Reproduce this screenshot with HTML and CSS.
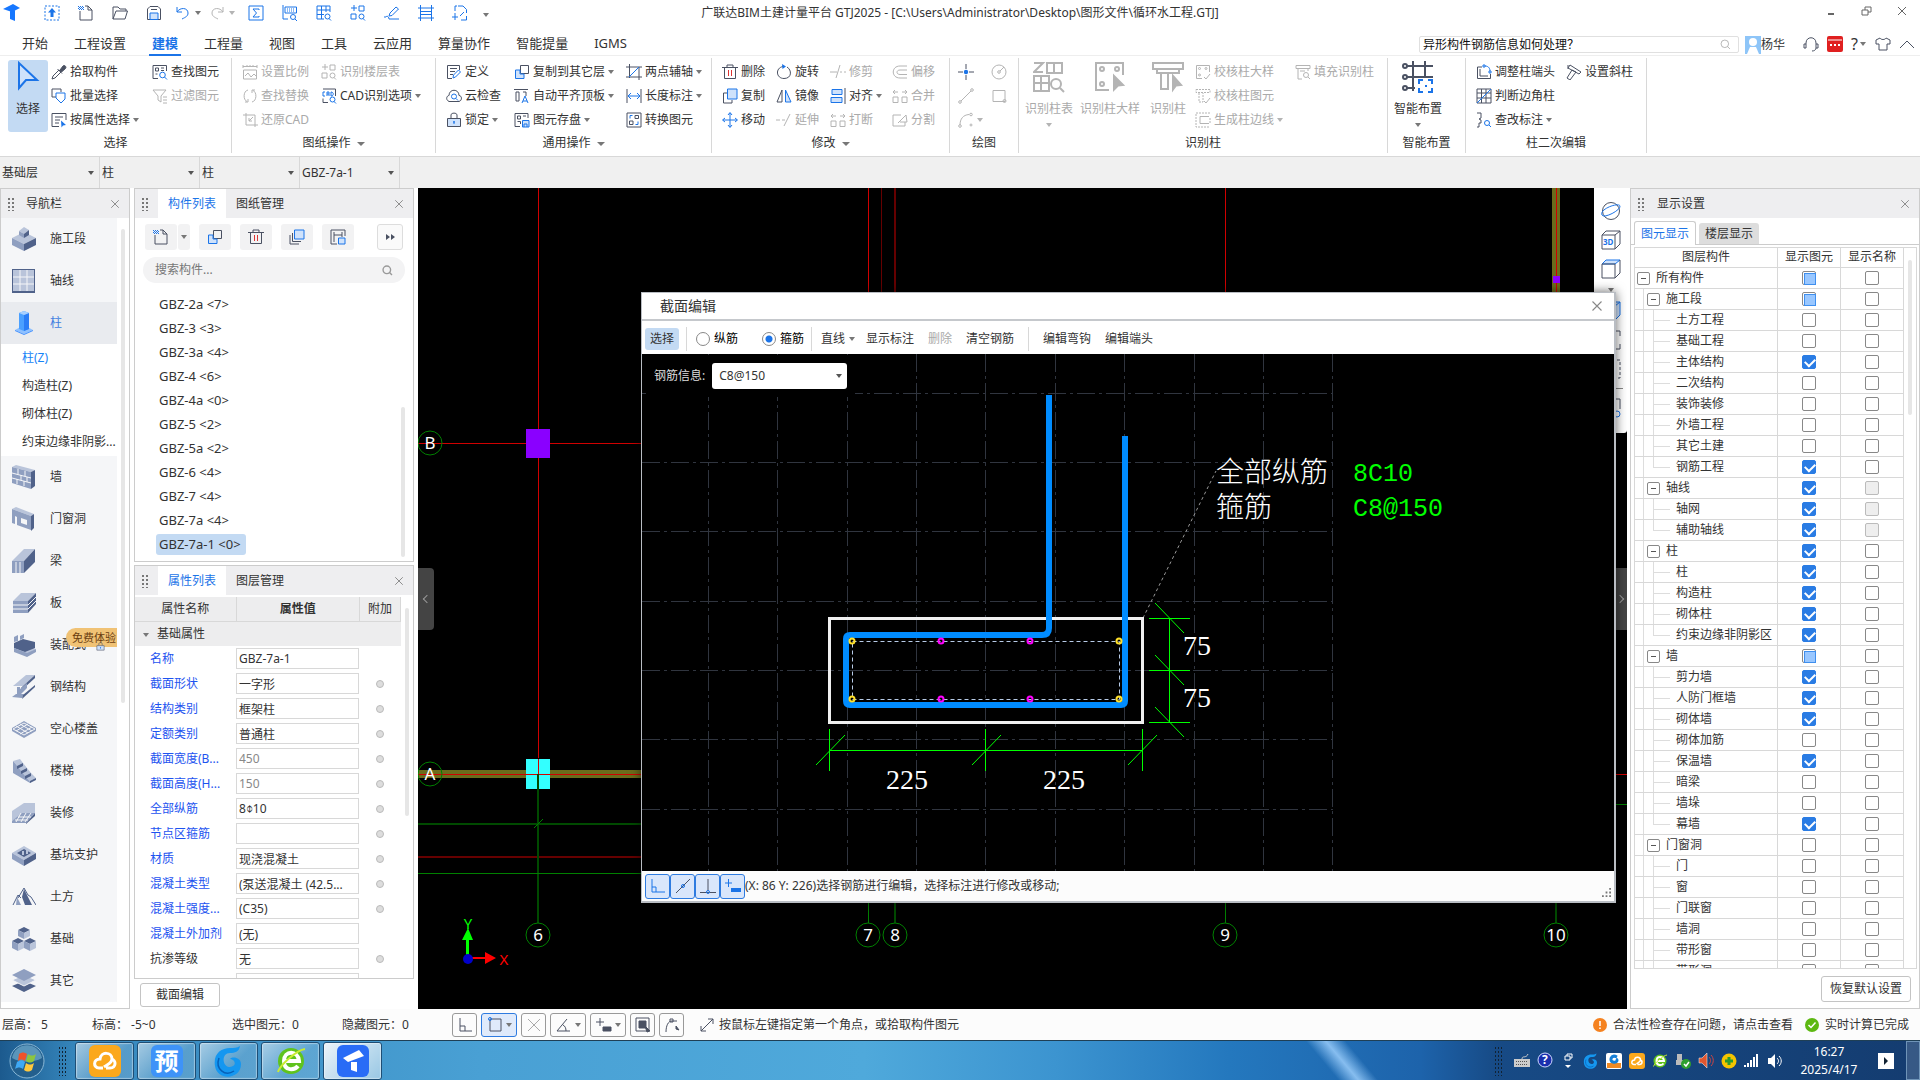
FILE: index.html
```html
<!DOCTYPE html>
<html lang="zh-CN">
<head>
    <meta charset="UTF-8">
    <meta name="viewport" content="width=device-width, initial-scale=1.0">
    <title>广联达BIM土建计量平台 GTJ2025</title>
    <link rel="stylesheet" href="styles.css">
</head>
<body>
    <!-- Icon sprite -->
    <svg class="sprite" aria-hidden="true">
        <symbol id="i-newsel" viewBox="0 0 16 16"><path class="b" stroke-dasharray="2 1.5" d="M1 1h14v14H1z"/><path class="bf" d="M8 3l4 4.500H9.500V12h-3V7.500H4z"/></symbol>
        <symbol id="i-new" viewBox="0 0 16 16"><path d="M2 6v9h12V5l-4-4H7M10 1v4h4"/><path class="b" stroke-dasharray="1 1" d="M0 1.500h5M1 2.500h5M0 3.500h5M1 4.500h5"/></symbol>
        <symbol id="i-open" viewBox="0 0 16 16"><path d="M1 14V2h5l2 2h6v2M1 14L4 6h11.500L13 14z"/></symbol>
        <symbol id="i-save" viewBox="0 0 16 16"><path d="M1.500 4l2.500-2.500h8L14.500 4v10.500h-13zM5 4.500h6"/><path class="b bl" d="M4 8h8v6.500H4z"/></symbol>
        <symbol id="i-undo" viewBox="0 0 16 16"><path class="b" d="M2 2v5h5M2 7c3-5 11-4.500 11 1 0 3-2 4-6 6"/></symbol>
        <symbol id="i-redo" viewBox="0 0 16 16"><path d="M14 2v5H9M14 7C11 2 3 2.500 3 8c0 3 2 4 6 6"/></symbol>
        <symbol id="i-sigma" viewBox="0 0 16 16"><path class="b" d="M1 1h14v14H1zM11 5V4H5l3.500 4L5 12h6v-1"/></symbol>
        <symbol id="i-tblfind" viewBox="0 0 16 16"><path class="b" d="M1 0v14h5M3 2h11.500v6H3z"/><path class="b" stroke-dasharray="1 1" d="M5 4h8M5 6h8"/><circle class="b" cx="11" cy="12" r="2.500"/><path class="b" d="M13 14l2 2"/></symbol>
        <symbol id="i-gridfind" viewBox="0 0 16 16"><path class="b" d="M1 1h13v6M1 1v13h7M1 5h13M1 9.500h7M5.500 1v13M10 1v6"/><circle class="b" cx="11.500" cy="11.500" r="2.500"/><path class="b" d="M13 13.500l2 2"/></symbol>
        <symbol id="i-compfind" viewBox="0 0 16 16"><path class="b" d="M1 3h6M4 0v6M9 1h5v5H9zM1 9h5v5H1z"/><circle class="b" cx="11.500" cy="11.500" r="2.500"/><path class="b" d="M13 13.500l2 2"/></symbol>
        <symbol id="i-pen" viewBox="0 0 16 16"><path class="b" d="M5 11l1-3 6-6 2.500 2L8 10.500zM0 12h2c1-2 3 0 3 2h10"/></symbol>
        <symbol id="i-ladder" viewBox="0 0 16 16"><path class="b" d="M2.500 0v16M13.500 0v16M0 3h16M0 13h16M2.500 6.500h11M2.500 9.500h11"/></symbol>
        <symbol id="i-addpage" viewBox="0 0 16 16"><path class="b" d="M6 1h5l3.500 3.500V8M3 6V1h2M14.500 11v4H9M3 8v7M0 12h6M8 11l4-4"/></symbol>
        <symbol id="i-pick" viewBox="0 0 16 16"><path d="M1 15l1-3 6-6 2 2-6 6z"/><path fill="currentColor" d="M6.500 5l4.500 4.500M9 6l3-4c1-1.500 4 .5 2.500 2.500L10.500 8z"/></symbol>
        <symbol id="i-batch" viewBox="0 0 16 16"><path d="M5 9H1V1h9v3"/><path class="b" d="M5 5h9v6l-4 4-5-5z"/></symbol>
        <symbol id="i-attr" viewBox="0 0 16 16"><path d="M8 14.500H1v-13h14V8M4 5h8M4 8h5M4 11h4"/><path class="bf" d="M10 8.500l5 4.500-3 .5-1.500 2z"/></symbol>
        <symbol id="i-find" viewBox="0 0 16 16"><path d="M6 14.500H1v-13h13.500V7M3.500 4h3v3h-3zM3.500 10h2M9 4h3M9 6.500h3"/><circle class="b" cx="10.500" cy="11" r="2.800"/><path class="b" d="M12.500 13l2.500 2.500"/></symbol>
        <symbol id="i-filter" viewBox="0 0 16 16"><path d="M1 2h13L9 8v6l-3-2V8zM11 9h4M11 12h4M11 15h4"/></symbol>
        <symbol id="i-scale" viewBox="0 0 16 16"><path d="M1 1v3M1 2.500h14M15 1v3M5 1v2M8 1v2M11 1v2M1.500 6h13v9h-13zM3 12l3-3 3 4 3-3 2 2"/></symbol>
        <symbol id="i-swap" viewBox="0 0 16 16"><path d="M6 2C1 3 1 12 5 13.500M3 14h3v-3M10 14c5-1 5-10 1-11.500M13 2h-3v3"/></symbol>
        <symbol id="i-crop" viewBox="0 0 16 16"><path d="M4 1v12h12M1 3h12v12M11 5L7 9M7 6v3h3"/></symbol>
        <symbol id="i-cad" viewBox="0 0 16 16"><path d="M7 14.500H2v-4M2 1h12.500v7"/><path class="b" d="M4 4H2v4h2M6 8V4h2v4M6 6h2M10 4v4c3 0 3-4 0-4"/><circle class="b" cx="11.500" cy="11.500" r="2.500"/><path class="b" d="M13 13.500l2 2"/></symbol>
        <symbol id="i-define" viewBox="0 0 16 16"><path d="M6 14.500H1.500v-13h12V6M4 4.500h7M4 7.500h5M4 10.500h3"/><path class="b" d="M7 14l.5-3 5-5 2 2-5 5z"/></symbol>
        <symbol id="i-cloud" viewBox="0 0 16 16"><path d="M3 13.500c-4-2-2-6 0-6 0-7 10-7 10 0 3 0 3.500 5 0 6z"/><circle class="b" cx="8" cy="8.500" r="2.500"/><path class="b" d="M10 10.500l2 2"/></symbol>
        <symbol id="i-lock" viewBox="0 0 16 16"><path class="bl" d="M1.500 6.500h13v8h-13z"/><path d="M5 6V3c0-2.500 6-2.500 6 0v3"/><path class="b" d="M8 9v3M7 10h2"/></symbol>
        <symbol id="i-copyto" viewBox="0 0 16 16"><path d="M6.500 1.500h8v8h-8z"/><path class="b bl" d="M6 6H1.500v8.500H10V10H6z"/></symbol>
        <symbol id="i-align" viewBox="0 0 16 16"><path d="M0 1.500h14M2 4h3v9H2zM9 4h3v4"/><path class="b" d="M8 15l3-7 3 7M9 13h4"/></symbol>
        <symbol id="i-store" viewBox="0 0 16 16"><path d="M6 14.500H1v-13h13V6M3.500 4h3v3h-3zM3.500 9.500h3V12M9 4h3"/><path class="b bl" d="M8.500 8.500H15V15H8.500zM10 15v-3h3v3"/></symbol>
        <symbol id="i-axis2" viewBox="0 0 16 16"><path d="M3.500 0v14M0 3h16M13 3v13M0 13h16"/><path class="b" d="M3 13L13 3"/></symbol>
        <symbol id="i-length" viewBox="0 0 16 16"><path d="M1 1v14M15 1v14"/><path class="b" d="M2 8h12M5 5L2 8l3 3M11 5l3 3-3 3"/></symbol>
        <symbol id="i-convert" viewBox="0 0 16 16"><path d="M1 1h14v14H1z"/><path d="M9 3.500h3.500v3H9zM3.500 9H7v3.500H3.500z"/><path class="b" d="M6.500 3.500H4v3M9.500 12.500H12v-3"/></symbol>
        <symbol id="i-trash" viewBox="0 0 16 16"><path d="M0 3.500h16M5 3V1h6v2M2.500 3.500v11h11v-11"/><path stroke="#d33" d="M6.500 6v6M9.500 6v6"/></symbol>
        <symbol id="i-copy" viewBox="0 0 16 16"><path d="M5 5H1.500v10H10v-3"/><path class="b bl" d="M5.500 1H15v10H5.500z"/></symbol>
        <symbol id="i-move" viewBox="0 0 16 16"><path class="b" d="M8 1v14M1 8h14M6 3l2-2.500L10 3M6 13l2 2.500 2-2.500M3 6L.5 8 3 10M13 6l2.500 2-2.500 2"/></symbol>
        <symbol id="i-rotate" viewBox="0 0 16 16"><path d="M7 2.500C-1 4 0 14.500 8 14.500S16 6 11 3"/><path class="bf" d="M6 0l4 2.500L6.500 5z"/></symbol>
        <symbol id="i-mirror" viewBox="0 0 16 16"><path d="M6 2v12H1z"/><path class="b bl" d="M9.500 2v12H15z"/></symbol>
        <symbol id="i-extend" viewBox="0 0 16 16"><path d="M0 8h4M6 8h3M8 14l6-12"/></symbol>
        <symbol id="i-trim" viewBox="0 0 16 16"><path d="M0 8h7M6 14l4-13M10 8h2M14 8h2"/></symbol>
        <symbol id="i-just" viewBox="0 0 16 16"><path d="M15 0v16"/><path class="b bl" d="M2 1.500h10v5H2zM1 9.500h11v5H1z"/></symbol>
        <symbol id="i-break" viewBox="0 0 16 16"><path d="M1 9h5v5.500H1zM10 9h5v5.500h-5zM6 4H1M3 2L1 4l2 2M10 4h5M13 2l2 2-2 2"/></symbol>
        <symbol id="i-offset" viewBox="0 0 16 16"><path d="M15 2H8c-9 0-9 12 0 12h7M15 6H8c-4 0-4 4.500 0 4.500h7"/></symbol>
        <symbol id="i-split" viewBox="0 0 16 16"><path d="M9 3H1v11h12v-4M6 11l8-8 1 7H8"/></symbol>
        <symbol id="i-point" viewBox="0 0 16 16"><path d="M8 0v5M8 11v5M0 8h5M11 8h5"/><circle class="bf" cx="8" cy="8" r="2.200"/></symbol>
        <symbol id="i-line" viewBox="0 0 16 16"><path d="M3 13L13 3"/><circle cx="2" cy="14" r="1.300"/><circle cx="14" cy="2" r="1.300"/></symbol>
        <symbol id="i-arc" viewBox="0 0 16 16"><path d="M2 13C2 7 5 3 11 2.500"/><circle cx="2" cy="14" r="1.300"/><circle cx="13" cy="2.500" r="1.300"/><circle cx="13" cy="13" r="1"/></symbol>
        <symbol id="i-circle" viewBox="0 0 16 16"><circle cx="8" cy="8" r="7"/><circle cx="8" cy="8" r="1.300"/><path d="M9 7l4-4"/></symbol>
        <symbol id="i-rect" viewBox="0 0 16 16"><path d="M2 2.500h12v11H2z"/><circle cx="13.500" cy="13" r="1.500"/></symbol>
        <symbol id="i-coltable" viewBox="0 0 32 32"><path d="M1 2h9L1 11h9M14 2h15v10H14zM21 2v10M1 15h15v15H1zM8 15v15M1 22h15"/><circle cx="23" cy="23" r="5"/><path d="M27 27l4 4"/></symbol>
        <symbol id="i-coldetail" viewBox="0 0 32 32"><path d="M29 14V2H2v27h13"/><circle cx="8" cy="8" r="2"/><circle cx="23" cy="8" r="2"/><circle cx="8" cy="23" r="2"/><path fill="currentColor" d="M20 15l9 9-5 .5-4 4z"/></symbol>
        <symbol id="i-col" viewBox="0 0 32 32"><path d="M1 2h30v6H1zM5 8v4h22V8M9 12v16h7V12"/><path fill="currentColor" d="M21 15l8 9-5 .5-3 4z"/></symbol>
        <symbol id="i-smart" viewBox="0 0 32 32"><path d="M4 5h27M4 16h27M4 27h9M11 0v30M23 0v16"/><circle cx="3" cy="5" r="2"/><circle cx="3" cy="16" r="2"/><circle cx="3" cy="27" r="2"/><path class="b" d="M17 23v-4h4M26 19h4v4M30 27v4h-4M21 31h-4v-4M23 25h2"/></symbol>
        <symbol id="i-check1" viewBox="0 0 16 16"><path d="M7 14.500H1.500v-13h13V8"/><circle cx="4.500" cy="4.500" r="1"/><circle cx="11" cy="4.500" r="1"/><circle cx="4.500" cy="11" r="1"/><path d="M9 13l2 2 4-5"/></symbol>
        <symbol id="i-check2" viewBox="0 0 16 16"><path stroke-dasharray="2 1" d="M1 1.500h14v3H1zM4 5v9h4V5"/><path d="M9 13l2 2 4-5"/></symbol>
        <symbol id="i-edge" viewBox="0 0 16 16"><path stroke-dasharray="2 1" d="M15 1H1v14h14M15 6v5"/><path d="M14 4.500H5v7h9"/></symbol>
        <symbol id="i-fill" viewBox="0 0 16 16"><path d="M1 1.500h14v3H1zM3 5v10h4M13 5v2M5 7h5"/><circle cx="11" cy="11" r="2.500"/><path d="M13 13l2 2"/></symbol>
        <symbol id="i-end" viewBox="0 0 16 16"><path d="M6 3H1.500v11.500h13V10M4 5v7h8"/><path class="b" d="M7 1h2v2H7zM9 2c4 0 5 3 5 5M13 7h2v2h-2z"/></symbol>
        <symbol id="i-corner" viewBox="0 0 16 16"><path d="M1 1h14v14H1zM1 5h14M1 10h14M5.500 1v14M10 1v14"/><path class="b" d="M1 15L15 1"/></symbol>
        <symbol id="i-mark" viewBox="0 0 16 16"><path d="M1 1h4v5l-2 1 2 1M5 8v3H3v4H1"/><circle class="b" cx="11" cy="11" r="2.500"/><path class="b" d="M13 13l2 2"/></symbol>
        <symbol id="i-skew" viewBox="0 0 16 16"><path d="M4 1l11 7-2 2L2 4zM6 6l4 2-6 8-3-2zM2 1v4"/></symbol>
        <symbol id="i-search" viewBox="0 0 16 16"><circle cx="7" cy="7" r="5.500"/><path d="M11 11l3.500 3.500"/></symbol>
        <symbol id="i-close" viewBox="0 0 16 16"><path d="M2 2l12 12M14 2L2 14"/></symbol>
        <symbol id="i-layers" viewBox="0 0 16 16"><path class="b bl" d="M5.500 1H15v9H5.500z"/><path d="M3.500 4v8.500H12M1 6v9h9"/></symbol>
        <symbol id="i-hsave" viewBox="0 0 16 16"><path d="M7 15H1V1h14v6M4 3v10M4 6h8V3M12 6v2"/><path class="b bl" d="M8.500 9H15v6H8.500z"/></symbol>

        <!-- Navigation icons -->
        <symbol id="n-site" viewBox="0 0 24 24"><path class="n1" d="M0 11l12-6 12 6-12 6z"/><path class="n2" d="M0 11l12 6v7L0 18z"/><path class="n3" d="M24 11l-12 6v7l12-6z"/><path class="n1" d="M7 4l5-4 5 3-5 4z"/><path class="n2" d="M7 4v4l5 3V7z"/><path class="n3" d="M17 3v5l-5 3V7z"/></symbol>
        <symbol id="n-axis" viewBox="0 0 24 24"><path class="n3" d="M0 0h23v24H0z"/><path class="n1" d="M1 1h21v21H1z"/><path class="nw" d="M8 1v21M15 1v21M1 8h21M1 15h21"/></symbol>
        <symbol id="n-col" viewBox="0 0 24 24"><g stroke="none"><path fill="#8fc1ff" d="M3 19l9-5 9 5-9 4z"/><path fill="#3f8fff" d="M3 19l9 4 9-4v1l-9 4-9-4z"/><path fill="#4ba0ff" d="M7 2l5-2 5 2v16l-5 2-5-2z"/><path fill="#2b7df6" d="M12 4l5-2v16l-5 2z"/><path fill="#a8d0ff" d="M7 2l5-2 5 2-5 2z"/></g></symbol>
        <symbol id="n-wall" viewBox="0 0 24 24"><path class="n1" d="M0 2l4-2 19 5-4 2z"/><path class="n2" d="M0 2l19 5v17L0 18z"/><path class="n3" d="M19 7l4-2v16l-4 3z"/><path class="nw" d="M0 8l19 5M0 13l19 5M6 4v5M13 6v5M9 10v5M15 12v5M5 14v5M12 16v5"/></symbol>
        <symbol id="n-door" viewBox="0 0 24 24"><path class="n1" d="M0 2l4-2 18 7-3 2z"/><path class="n2" fill-rule="evenodd" d="M0 2l19 7v14l-14-5V10L3 9v8l-3-1zM9 11v5l6 2v-5z"/><path class="n3" d="M19 9l3-2v14l-3 3z"/></symbol>
        <symbol id="n-beam" viewBox="0 0 24 24"><path class="n1" d="M0 12L12 0h11L12 12z"/><path class="n2" d="M0 12h12v12H0z"/><path class="n3" d="M12 12L23 0v13L12 24z"/><path class="nw" d="M4 13v11M8 13v11"/></symbol>
        <symbol id="n-slab" viewBox="0 0 24 24"><path class="n1" d="M1 10L9 2h15l-8 8z"/><path class="n2" d="M1 10h15v12H1z"/><path class="n3" d="M16 10l8-8v11l-8 9z"/><path class="nw" d="M1 14h15l8-8M1 18h15l8-8"/></symbol>
        <symbol id="n-prefab" viewBox="0 0 24 24"><path class="n1" d="M2 15l8-4 14 5-9 5z"/><path class="n3" d="M2 10l9-4 12 3v6l-10 4L2 15z"/><path class="n2" d="M2 15l13 5 9-4v3l-9 5-13-5zM2 4l4-2v6l-4 1zM8 3l4-2v4L8 7z"/></symbol>
        <symbol id="n-steel" viewBox="0 0 24 24"><path class="n1" d="M1 11L14 0h9L11 11z"/><path class="n3" d="M23 0v3L12 13H9l2-2z"/><path class="n2" d="M5 12h3v8H5zM0 22L4 19h8l-2 4zM8 14l7-6v5l-7 7z"/><path class="n3" d="M10 24l13-12v-2L11 20z"/></symbol>
        <symbol id="n-hollow" viewBox="0 0 24 24"><path class="n2" d="M0 11l12-7 12 7v3l-12 7-12-7z"/><path class="nw" d="M4 9l12 7M8 7l12 7M4 14l12-7M8 17l12-7M1 12l11-6 11 6-11 6z"/></symbol>
        <symbol id="n-stair" viewBox="0 0 24 24"><path class="n2" d="M1 2v12l17 10 5-4z"/><path class="n1" d="M1 2l7-2 3 4-6 3zM5 7l6-3 4 5-6 3zM9 12l6-3 4 5-6 3zM13 17l6-3 5 5-6 4z"/><path class="n3" d="M11 4v3l-6 3V7zM15 9v3l-6 3v-3zM19 14v3l-6 3v-3zM24 19v2l-6 3v-2z"/></symbol>
        <symbol id="n-decor" viewBox="0 0 24 24"><path class="n1" d="M0 10L12 2h11v11H12L0 20z"/><path class="n2" d="M0 20l10-8h13l-9 10H0z"/><path class="n3" d="M14 22l9-10v3l-9 8z"/><path class="nw" d="M6 16h13M3 19h13M9 12l-5 9M14 12l-5 9M19 12l-6 9"/></symbol>
        <symbol id="n-pit" viewBox="0 0 24 24"><path class="n1" d="M0 10l12-7 12 7-12 7z"/><path class="n2" d="M0 10l12 7v6L0 16z"/><path class="n3" d="M24 10l-12 7v6l12-7zM5 10l7-4 7 4-7 4z"/><path class="n1" d="M10 8h2v4h-2zM14 7h2v4h-2z"/></symbol>
        <symbol id="n-earth" viewBox="0 0 24 24"><path class="n3" d="M12 4l8 16h-7l-3-8z"/><path class="n2" d="M5 12l4 8H4z"/><path class="nd" d="M1 20l5-10 3 3M6 13l6-10 4 7 3 2 5 8"/></symbol>
        <symbol id="n-base" viewBox="0 0 24 24"><path class="n3" d="M6 3l6-3 6 3-6 3zM0 14l6-3 6 3-6 3zM12 14l6-3 6 3-6 3z"/><path class="n2" d="M6 3l6 3v6L6 9zM0 14l6 3v7l-6-3zM12 14l6 3v7l-6-3z"/><path class="n1" d="M18 3l-6 3v6l6-3zM12 14l-6 3v7l6-3zM24 14l-6 3v7l6-3z"/></symbol>
        <symbol id="n-other" viewBox="0 0 24 24"><path class="n3" d="M0 17l12-5 12 5-12 6z"/><path class="n1 nw" d="M0 11l12-5 12 5-12 6z"/><path class="n2" d="M0 6l12-6 12 6-12 6z"/></symbol>

        <!-- Application logos -->
        <symbol id="a-cloud" viewBox="0 0 32 32"><rect width="32" height="32" rx="6" fill="#fba81c"/><path class="aw" d="M14 23H10c-6 0-6-9 1-9 1-8 12-7 12 0 0 4-4 5-8 8M17 23h4c6 0 7-8 1-9"/></symbol>
        <symbol id="a-g" viewBox="0 0 32 32"><path fill="#1597f0" d="M27 1c-1 6-5 7-10 7-9 0-8 14 0 14 4 0 6-3 4-6-1-1-2-2-4-2 3-3 11-1 11 5 0 16-24 17-26 2C0 9 8 3 17 3c4 0 7 0 10-2z"/><path fill="none" stroke="#0761b8" stroke-width="1.500" d="M6 13c-4 11 6 19 15 13"/></symbol>
        <symbol id="a-e" viewBox="0 0 32 32"><circle cx="16" cy="16" r="13" fill="#5fc31d"/><path fill="none" stroke="#fff" stroke-width="4" d="M9 16h15c-1-11-15-11-15 0s11 9 14 5"/><path fill="none" stroke="#c9ec32" stroke-width="2" d="M3 27C5 20 22 5 30 4"/></symbol>
        <symbol id="a-t" viewBox="0 0 32 32"><rect width="32" height="32" rx="6" fill="#296cf6"/><path fill="#fff" d="M6 13L22 5l5 6-16 6zM14 17h6v10l-6-2z"/></symbol>
    </svg>

    <!-- Title bar -->
    <header class="title-bar">
        <div class="quick-bar">
            <svg class="logo" viewBox="0 0 20 20"><path fill="#1677ff" d="M1 6l10-5 7 4-8 4zM8 8l5-2v12l-5-2z"/></svg>
            <button class="quick" aria-label="选择"><svg><use href="#i-newsel"/></svg></button>
            <button class="quick" aria-label="新建"><svg><use href="#i-new"/></svg></button>
            <button class="quick" aria-label="打开"><svg><use href="#i-open"/></svg></button>
            <button class="quick" aria-label="保存"><svg><use href="#i-save"/></svg></button>
            <button class="quick drop" aria-label="撤销"><svg><use href="#i-undo"/></svg><i class="caret"></i></button>
            <button class="quick drop" aria-label="恢复" disabled><svg><use href="#i-redo"/></svg><i class="caret"></i></button>
            <button class="quick" aria-label="汇总计算"><svg><use href="#i-sigma"/></svg></button>
            <button class="quick" aria-label="查看报表"><svg><use href="#i-tblfind"/></svg></button>
            <button class="quick" aria-label="查看工程量"><svg><use href="#i-gridfind"/></svg></button>
            <button class="quick" aria-label="查看计算式"><svg><use href="#i-compfind"/></svg></button>
            <button class="quick" aria-label="编辑钢筋"><svg><use href="#i-pen"/></svg></button>
            <button class="quick" aria-label="钢筋三维"><svg><use href="#i-ladder"/></svg></button>
            <button class="quick" aria-label="添加"><svg><use href="#i-addpage"/></svg></button>
            <button class="quick-more" aria-label="更多"><i class="caret"></i></button>
        </div>
        <h1 class="window-title">广联达BIM土建计量平台 GTJ2025 - [C:\Users\Administrator\Desktop\图形文件\循环水工程.GTJ]</h1>
        <div class="window-buttons">
            <button aria-label="最小化"><svg viewBox="0 0 12 12"><path d="M2 9h6" stroke-width="2"/></svg></button>
            <button aria-label="还原"><svg viewBox="0 0 12 12"><path d="M1 5h6v5H1zM4 5V2h6v5H7"/></svg></button>
            <button aria-label="关闭"><svg viewBox="0 0 12 12"><path d="M2 2l8 8M10 2l-8 8"/></svg></button>
        </div>
    </header>

    <!-- Menu tabs -->
    <nav class="menu-bar">
        <div class="menu-tabs">
            <button>开始</button><button>工程设置</button><button class="active">建模</button><button>工程量</button><button>视图</button><button>工具</button><button>云应用</button><button>算量协作</button><button>智能提量</button><button>IGMS</button>
        </div>
        <div class="menu-search">
            <input type="text" value="异形构件钢筋信息如何处理？" aria-label="搜索帮助">
            <svg><use href="#i-search"/></svg>
        </div>
        <div class="account">
            <svg class="avatar" viewBox="0 0 16 18"><path fill="#8ec5f8" d="M0 0h16v18H0z"/><circle cx="8" cy="6" r="4" fill="#fff"/><path fill="#fff" d="M2 18l3-7h6l3 7z"/></svg>
            <span>杨华</span>
        </div>
        <div class="help-icons">
            <svg viewBox="0 0 16 16"><path d="M3 12V7c0-7 10-7 10 0v5M3 8H1v4h2M13 8h2v4h-2c0 2-2 3-4 3"/></svg>
            <svg class="red-app" viewBox="0 0 16 16"><rect width="16" height="16" rx="2" fill="#e02020"/><path stroke="#fff" d="M1 4h14"/><path stroke="#fff" stroke-dasharray="2 2" stroke-width="2" d="M3 9h10"/></svg>
            <span class="question">?<i class="caret"></i></span>
            <svg viewBox="0 0 16 16"><path d="M5 2L1 4v4h3v6h8V8h3V4l-4-2c-1 2-5 2-6 0z"/></svg>
            <svg viewBox="0 0 16 16"><path d="M1 12l7-7 7 7"/></svg>
        </div>
    </nav>

    <!-- Ribbon -->
    <section class="ribbon">
        <div class="group g-select">
            <div class="tools">
                <button class="big active"><svg viewBox="0 0 24 32"><path class="b bl" d="M3 2v25l7-8h11z"/></svg><span>选择</span></button>
                <div class="col">
                    <button class="tool"><svg><use href="#i-pick"/></svg>拾取构件</button>
                    <button class="tool"><svg><use href="#i-batch"/></svg>批量选择</button>
                    <button class="tool"><svg><use href="#i-attr"/></svg>按属性选择<i class="caret"></i></button>
                </div>
                <div class="col">
                    <button class="tool"><svg><use href="#i-find"/></svg>查找图元</button>
                    <button class="tool" disabled><svg><use href="#i-filter"/></svg>过滤图元</button>
                </div>
            </div>
            <div class="group-name">选择</div>
        </div>
        <div class="group g-sheet">
            <div class="tools">
                <div class="col">
                    <button class="tool" disabled><svg><use href="#i-scale"/></svg>设置比例</button>
                    <button class="tool" disabled><svg><use href="#i-swap"/></svg>查找替换</button>
                    <button class="tool" disabled><svg><use href="#i-crop"/></svg>还原CAD</button>
                </div>
                <div class="col">
                    <button class="tool" disabled><svg><use href="#i-compfind"/></svg>识别楼层表</button>
                    <button class="tool"><svg><use href="#i-cad"/></svg>CAD识别选项<i class="caret"></i></button>
                </div>
            </div>
            <div class="group-name">图纸操作<i class="caret wide"></i></div>
        </div>
        <div class="group g-common">
            <div class="tools">
                <div class="col">
                    <button class="tool"><svg><use href="#i-define"/></svg>定义</button>
                    <button class="tool"><svg><use href="#i-cloud"/></svg>云检查</button>
                    <button class="tool"><svg><use href="#i-lock"/></svg>锁定<i class="caret"></i></button>
                </div>
                <div class="col">
                    <button class="tool"><svg><use href="#i-copyto"/></svg>复制到其它层<i class="caret"></i></button>
                    <button class="tool"><svg><use href="#i-align"/></svg>自动平齐顶板<i class="caret"></i></button>
                    <button class="tool"><svg><use href="#i-store"/></svg>图元存盘<i class="caret"></i></button>
                </div>
                <div class="col">
                    <button class="tool"><svg><use href="#i-axis2"/></svg>两点辅轴<i class="caret"></i></button>
                    <button class="tool"><svg><use href="#i-length"/></svg>长度标注<i class="caret"></i></button>
                    <button class="tool"><svg><use href="#i-convert"/></svg>转换图元</button>
                </div>
            </div>
            <div class="group-name">通用操作<i class="caret wide"></i></div>
        </div>
        <div class="group g-modify">
            <div class="tools">
                <div class="col">
                    <button class="tool"><svg><use href="#i-trash"/></svg>删除</button>
                    <button class="tool"><svg><use href="#i-copy"/></svg>复制</button>
                    <button class="tool"><svg><use href="#i-move"/></svg>移动</button>
                </div>
                <div class="col">
                    <button class="tool"><svg><use href="#i-rotate"/></svg>旋转</button>
                    <button class="tool"><svg><use href="#i-mirror"/></svg>镜像</button>
                    <button class="tool" disabled><svg><use href="#i-extend"/></svg>延伸</button>
                </div>
                <div class="col">
                    <button class="tool" disabled><svg><use href="#i-trim"/></svg>修剪</button>
                    <button class="tool"><svg><use href="#i-just"/></svg>对齐<i class="caret"></i></button>
                    <button class="tool" disabled><svg><use href="#i-break"/></svg>打断</button>
                </div>
                <div class="col">
                    <button class="tool" disabled><svg><use href="#i-offset"/></svg>偏移</button>
                    <button class="tool" disabled><svg><use href="#i-break"/></svg>合并</button>
                    <button class="tool" disabled><svg><use href="#i-split"/></svg>分割</button>
                </div>
            </div>
            <div class="group-name">修改<i class="caret wide"></i></div>
        </div>
        <div class="group g-draw">
            <div class="tools">
                <div class="col">
                    <button class="tool" aria-label="点"><svg><use href="#i-point"/></svg></button>
                    <button class="tool" aria-label="直线" disabled><svg><use href="#i-line"/></svg></button>
                    <button class="tool" aria-label="弧线" disabled><svg><use href="#i-arc"/></svg><i class="caret"></i></button>
                </div>
                <div class="col">
                    <button class="tool" aria-label="圆" disabled><svg><use href="#i-circle"/></svg></button>
                    <button class="tool" aria-label="矩形" disabled><svg><use href="#i-rect"/></svg></button>
                </div>
            </div>
            <div class="group-name">绘图</div>
        </div>
        <div class="group g-detect">
            <div class="tools">
                <button class="big" disabled><svg><use href="#i-coltable"/></svg><span>识别柱表</span><i class="caret"></i></button>
                <button class="big" disabled><svg><use href="#i-coldetail"/></svg><span>识别柱大样</span></button>
                <button class="big" disabled><svg><use href="#i-col"/></svg><span>识别柱</span></button>
                <div class="col">
                    <button class="tool" disabled><svg><use href="#i-check1"/></svg>校核柱大样</button>
                    <button class="tool" disabled><svg><use href="#i-check2"/></svg>校核柱图元</button>
                    <button class="tool" disabled><svg><use href="#i-edge"/></svg>生成柱边线<i class="caret"></i></button>
                </div>
                <div class="col">
                    <button class="tool" disabled><svg><use href="#i-fill"/></svg>填充识别柱</button>
                </div>
            </div>
            <div class="group-name">识别柱</div>
        </div>
        <div class="group g-smart">
            <div class="tools">
                <button class="big"><svg><use href="#i-smart"/></svg><span>智能布置</span><i class="caret"></i></button>
            </div>
            <div class="group-name">智能布置</div>
        </div>
        <div class="group g-edit">
            <div class="tools">
                <div class="col">
                    <button class="tool"><svg><use href="#i-end"/></svg>调整柱端头</button>
                    <button class="tool"><svg><use href="#i-corner"/></svg>判断边角柱</button>
                    <button class="tool"><svg><use href="#i-mark"/></svg>查改标注<i class="caret"></i></button>
                </div>
                <div class="col">
                    <button class="tool"><svg><use href="#i-skew"/></svg>设置斜柱</button>
                </div>
            </div>
            <div class="group-name">柱二次编辑</div>
        </div>
    </section>

    <!-- Floor / component selectors -->
    <div class="selector-bar">
        <label class="pick"><select aria-label="楼层"><option>基础层</option></select></label>
        <label class="pick"><select aria-label="构件大类"><option>柱</option></select></label>
        <label class="pick"><select aria-label="构件类型"><option>柱</option></select></label>
        <label class="pick"><select aria-label="构件"><option>GBZ-7a-1</option></select></label>
    </div>

    <main class="workspace">
        <!-- Navigation panel -->
        <aside class="panel nav-panel">
            <div class="panel-head"><i class="grip"></i><span class="panel-title">导航栏</span><button class="close" aria-label="关闭"><svg><use href="#i-close"/></svg></button></div>
            <div class="nav-body">
                <div class="nav-list">
                    <a href="#" class="nav-item"><svg><use href="#n-site"/></svg>施工段</a>
                    <a href="#" class="nav-item"><svg><use href="#n-axis"/></svg>轴线</a>
                    <a href="#" class="nav-item active"><svg><use href="#n-col"/></svg>柱</a>
                    <div class="nav-sub">
                        <a href="#" class="active">柱(Z)</a>
                        <a href="#">构造柱(Z)</a>
                        <a href="#">砌体柱(Z)</a>
                        <a href="#">约束边缘非阴影...</a>
                    </div>
                    <a href="#" class="nav-item"><svg><use href="#n-wall"/></svg>墙</a>
                    <a href="#" class="nav-item"><svg><use href="#n-door"/></svg>门窗洞</a>
                    <a href="#" class="nav-item"><svg><use href="#n-beam"/></svg>梁</a>
                    <a href="#" class="nav-item"><svg><use href="#n-slab"/></svg>板</a>
                    <a href="#" class="nav-item"><svg><use href="#n-prefab"/></svg>装配式<span class="trial">免费体验</span><svg class="trial-lock"><use href="#i-lock"/></svg></a>
                    <a href="#" class="nav-item"><svg><use href="#n-steel"/></svg>钢结构</a>
                    <a href="#" class="nav-item"><svg><use href="#n-hollow"/></svg>空心楼盖</a>
                    <a href="#" class="nav-item"><svg><use href="#n-stair"/></svg>楼梯</a>
                    <a href="#" class="nav-item"><svg><use href="#n-decor"/></svg>装修</a>
                    <a href="#" class="nav-item"><svg><use href="#n-pit"/></svg>基坑支护</a>
                    <a href="#" class="nav-item"><svg><use href="#n-earth"/></svg>土方</a>
                    <a href="#" class="nav-item"><svg><use href="#n-base"/></svg>基础</a>
                    <a href="#" class="nav-item"><svg><use href="#n-other"/></svg>其它</a>
                </div>
                <div class="scrollbar nav-scroll"><i></i></div>
            </div>
        </aside>

        <div class="side-column">
            <!-- Component list -->
            <section class="panel list-panel">
                <div class="panel-head"><i class="grip"></i><button class="tab active">构件列表</button><button class="tab">图纸管理</button><button class="close" aria-label="关闭"><svg><use href="#i-close"/></svg></button></div>
                <div class="list-tools">
                    <div class="split"><button aria-label="新建"><svg><use href="#i-new"/></svg></button><button class="arrow" aria-label="新建选项"><i class="caret"></i></button></div>
                    <button aria-label="复制"><svg><use href="#i-copyto"/></svg></button>
                    <button aria-label="删除"><svg><use href="#i-trash"/></svg></button>
                    <button aria-label="层间复制"><svg><use href="#i-layers"/></svg></button>
                    <button aria-label="存档"><svg><use href="#i-hsave"/></svg></button>
                    <button class="more" aria-label="更多"><svg viewBox="0 0 16 16"><path class="arrows" d="M4 5l4 3-4 3zM9 5l4 3-4 3z"/></svg></button>
                </div>
                <div class="list-search"><input type="text" placeholder="搜索构件..." aria-label="搜索构件"><svg><use href="#i-search"/></svg></div>
                <div class="list-body">
                    <ul class="components">
                        <li><a href="#">GBZ-2a &lt;7&gt;</a></li>
                        <li><a href="#">GBZ-3 &lt;3&gt;</a></li>
                        <li><a href="#">GBZ-3a &lt;4&gt;</a></li>
                        <li><a href="#">GBZ-4 &lt;6&gt;</a></li>
                        <li><a href="#">GBZ-4a &lt;0&gt;</a></li>
                        <li><a href="#">GBZ-5 &lt;2&gt;</a></li>
                        <li><a href="#">GBZ-5a &lt;2&gt;</a></li>
                        <li><a href="#">GBZ-6 &lt;4&gt;</a></li>
                        <li><a href="#">GBZ-7 &lt;4&gt;</a></li>
                        <li><a href="#">GBZ-7a &lt;4&gt;</a></li>
                        <li><a href="#" class="selected">GBZ-7a-1 &lt;0&gt;</a></li>
                    </ul>
                    <div class="scrollbar list-scroll"><i></i></div>
                </div>
            </section>

            <!-- Property list -->
            <section class="panel prop-panel">
                <div class="panel-head"><i class="grip"></i><button class="tab active">属性列表</button><button class="tab">图层管理</button><button class="close" aria-label="关闭"><svg><use href="#i-close"/></svg></button></div>
                <div class="prop-body">
                    <table class="props">
                        <thead><tr><th>属性名称</th><th class="strong">属性值</th><th>附加</th></tr></thead>
                        <tbody>
                            <tr class="section"><td colspan="3"><i class="caret"></i>基础属性</td></tr>
                            <tr><td><label for="p1">名称</label></td><td><input id="p1" type="text" value="GBZ-7a-1"></td><td></td></tr>
                            <tr><td><label for="p2">截面形状</label></td><td><input id="p2" type="text" value="一字形"></td><td><i class="dot-mark"></i></td></tr>
                            <tr><td><label for="p3">结构类别</label></td><td><input id="p3" type="text" value="框架柱"></td><td><i class="dot-mark"></i></td></tr>
                            <tr><td><label for="p4">定额类别</label></td><td><input id="p4" type="text" value="普通柱"></td><td><i class="dot-mark"></i></td></tr>
                            <tr><td><label for="p5">截面宽度(B...</label></td><td><input id="p5" type="text" value="450" disabled></td><td><i class="dot-mark"></i></td></tr>
                            <tr><td><label for="p6">截面高度(H...</label></td><td><input id="p6" type="text" value="150" disabled></td><td><i class="dot-mark"></i></td></tr>
                            <tr><td><label for="p7">全部纵筋</label></td><td><input id="p7" type="text" value="8⌽10"></td><td><i class="dot-mark"></i></td></tr>
                            <tr><td><label for="p8">节点区箍筋</label></td><td><input id="p8" type="text" value=""></td><td><i class="dot-mark"></i></td></tr>
                            <tr><td><label for="p9">材质</label></td><td><input id="p9" type="text" value="现浇混凝土"></td><td><i class="dot-mark"></i></td></tr>
                            <tr><td><label for="p10">混凝土类型</label></td><td><input id="p10" type="text" value="(泵送混凝土 (42.5..."></td><td><i class="dot-mark"></i></td></tr>
                            <tr><td><label for="p11">混凝土强度...</label></td><td><input id="p11" type="text" value="(C35)"></td><td><i class="dot-mark"></i></td></tr>
                            <tr><td><label for="p12">混凝土外加剂</label></td><td><input id="p12" type="text" value="(无)"></td><td></td></tr>
                            <tr class="plain"><td><label for="p13">抗渗等级</label></td><td><input id="p13" type="text" value="无"></td><td><i class="dot-mark"></i></td></tr>
                            <tr class="plain"><td></td><td><input type="text" value="" aria-label="其它属性"></td><td></td></tr>
                        </tbody>
                    </table>
                    <div class="scrollbar prop-scroll"><i></i></div>
                </div>
            </section>
            <button class="push section-edit">截面编辑</button>
        </div>

        <!-- Drawing area -->
        <div class="canvas">
            <svg class="plan">
                <g class="red">
                    <path d="M120.500 0v570"/><path d="M0 255.500h230"/><path d="M450.500 0v110M807.500 0v110M1190 586.500h20"/>
                    <path class="dim" d="M463.500 0v110"/><path class="dim thick" d="M477 0v110M0 669h230"/>
                </g>
                <path class="band" d="M0 586h230M1138 0v110"/>
                <path class="red" d="M0 586.500h230M1138.500 0v110"/>
                <rect class="purple" x="108" y="241" width="24" height="29"/>
                <rect class="purple" x="1135" y="88" width="7" height="7"/>
                <rect class="cyan" x="108" y="571" width="24" height="30"/>
                <path class="red" d="M108 586.500h24M120.500 571v15"/>
                <path class="green dim thick" d="M120 586v149M0 636h230M477 700v35M1138 700v35"/>
                <path class="green" d="M0 685.500h230M450.500 700v35M807.500 700v35M1190 616.500h20M116 640l9-9"/>
                <g class="bubble">
                    <circle cx="12" cy="255" r="12"/><circle cx="12" cy="586" r="12"/><circle cx="120" cy="747" r="12"/><circle cx="450" cy="747" r="12"/><circle cx="477" cy="747" r="12"/><circle cx="807" cy="747" r="12"/><circle cx="1138" cy="747" r="12"/>
                </g>
                <g class="bubble-text">
                    <text x="12" y="261">B</text><text x="12" y="592">A</text><text x="120" y="753">6</text><text x="450" y="753">7</text><text x="477" y="753">8</text><text x="807" y="753">9</text><text x="1138" y="753">10</text>
                </g>
                <g class="axes">
                    <path fill="#0f0" d="M48 768v-16h-4l6-12 5 12h-4v16z"/>
                    <path fill="#f00" d="M54 769h13v-5l11 6-11 6v-5H54z"/>
                    <circle cx="50" cy="771" r="5" fill="#00c"/>
                    <text class="axis-y" x="50" y="741">Y</text><text class="axis-x" x="86" y="777">X</text>
                </g>
            </svg>
            <button class="handle left" aria-label="收起左侧"></button>
            <button class="handle right" aria-label="收起右侧"></button>
            <div class="view-tools">
                <button aria-label="动态观察"><svg viewBox="0 0 20 20"><circle cx="10" cy="10" r="8.500"/><path class="b" d="M1 14C-2 8 18 1 19 5s-16 13-18 9z"/></svg></button>
                <button aria-label="三维"><svg viewBox="0 0 20 20"><path d="M1 5h13v14H1zM1 5l4-4h14v13l-5 5M14 5l5-4"/><text x="2" y="15">3D</text></svg></button>
                <button aria-label="俯视"><svg viewBox="0 0 20 20"><path class="b bl" d="M1 5l4-4h14l-5 4z"/><path d="M1 5h13v14H1zM19 1v13l-5 5"/></svg></button>
                <i class="caret"></i>
                <button aria-label="实体"><svg viewBox="0 0 20 20"><path class="b bl" d="M1 5l4-4h14v13l-5 5H1zM1 5h13v14M14 5l5-4"/></svg></button>
                <button aria-label="全屏"><svg viewBox="0 0 20 20"><path d="M1 6V1h5M14 1h5v5M19 14v5h-5M6 19H1v-5"/></svg></button>
                <button aria-label="局部"><svg viewBox="0 0 20 20"><path stroke-dasharray="3 2" d="M1 1h18v18H1z"/></svg></button>
                <hr>
                <button aria-label="显示"><svg viewBox="0 0 20 20"><path d="M1 1h18v10M1 1v16h10"/><circle class="b" cx="16" cy="16" r="3"/></svg></button>
            </div>

            <!-- Section editor dialog -->
            <div class="dialog" role="dialog" aria-label="截面编辑">
                <div class="dialog-title"><span>截面编辑</span><button class="close" aria-label="关闭"><svg><use href="#i-close"/></svg></button></div>
                <div class="dialog-tools">
                    <button class="on">选择</button>
                    <i class="sep"></i>
                    <label class="radio"><input type="radio" name="bar">纵筋</label>
                    <label class="radio"><input type="radio" name="bar" checked>箍筋</label>
                    <i class="sep"></i>
                    <button class="line-drop">直线<i class="caret"></i></button>
                    <button>显示标注</button>
                    <button disabled>删除</button>
                    <button>清空钢筋</button>
                    <i class="sep"></i>
                    <button>编辑弯钩</button>
                    <button>编辑端头</button>
                </div>
                <div class="dialog-canvas">
                    <svg class="section-drawing">
                        <path class="grid" d="M66.500 0v520M135.500 0v520M205.500 0v520M274.500 0v520M343.500 0v520M413.500 0v520M482.500 0v520M552.500 0v520M621.500 0v520M690.500 0v520M0 39.500h691M0 108.500h691M0 177.500h691M0 247.500h691M0 316.500h691M0 385.500h691M0 455.500h691"/>
                        <path class="leader" d="M501 264l73-147"/>
                        <path class="outline" d="M187.500 264.500h313v104h-313z"/>
                        <path class="stirrup" d="M407 41v233q0 7-7 7H208q-4 0-4 4v62q0 4 4 4h271q4 0 4-4V82"/>
                        <path class="ties" d="M210.500 287.500h267v58h-267z"/>
                        <g class="corner-bar"><circle cx="210" cy="287" r="2.500"/><circle cx="477" cy="287" r="2.500"/><circle cx="210" cy="345" r="2.500"/><circle cx="477" cy="345" r="2.500"/></g>
                        <g class="side-bar"><circle cx="299" cy="287" r="2.500"/><circle cx="388" cy="287" r="2.500"/><circle cx="299" cy="345" r="2.500"/><circle cx="388" cy="345" r="2.500"/></g>
                        <path class="dims" d="M187.500 375v42M343.500 375v42M500.500 375v42M187 396.500h314M174 411l29-30M330 411l29-30M486 411l29-30M507 264.500h41M507 316.500h41M507 368.500h41M527.500 264v105M513 249l29 30M513 301l29 30M513 353l29 30"/>
                        <g class="dim-text"><text x="244" y="435">225</text><text x="401" y="435">225</text><text x="541" y="301">75</text><text x="541" y="353">75</text><text x="574" y="128">全部纵筋</text><text x="574" y="163">箍筋</text></g>
                        <g class="bar-text"><text x="711" y="127">8C10</text><text x="711" y="162">C8@150</text></g>
                    </svg>
                    <div class="bar-info"><label for="barInfo">钢筋信息:</label><span class="pick"><select id="barInfo"><option>C8@150</option></select></span></div>
                </div>
                <div class="dialog-status">
                    <button aria-label="正交"><svg viewBox="0 0 16 16"><path class="b" d="M2 1v13h13M2 9h4v5"/></svg></button>
                    <button aria-label="中点"><svg viewBox="0 0 16 16"><path d="M1 15L15 1"/><circle class="b" cx="8" cy="8" r="1.500"/></svg></button>
                    <button aria-label="垂点"><svg viewBox="0 0 16 16"><path d="M8 1v12M0 14.500h16"/><circle class="b" cx="8" cy="14" r="1.500"/></svg></button>
                    <button aria-label="偏移"><svg viewBox="0 0 16 16"><path class="b" d="M0 5h7M3.500 1v8"/><path class="bf" d="M6 10h10v4H6z"/></svg></button>
                    <span>(X: 86 Y: 226)选择钢筋进行编辑，选择标注进行修改或移动;</span>
                    <svg class="resize" viewBox="0 0 10 10"><path d="M8 0h2v2H8zM4 4h2v2H4zM8 4h2v2H8zM0 8h2v2H0zM4 8h2v2H4zM8 8h2v2H8z"/></svg>
                </div>
            </div>
        </div>

        <!-- Display settings -->
        <aside class="panel display-panel">
            <div class="panel-head"><i class="grip"></i><span class="panel-title">显示设置</span><button class="close" aria-label="关闭"><svg><use href="#i-close"/></svg></button></div>
            <div class="display-tabs"><button class="active">图元显示</button><button>楼层显示</button></div>
            <div class="tree-box">
                <table class="tree">
                    <thead><tr><th>图层构件</th><th>显示图元</th><th>显示名称</th></tr></thead>
                    <tbody>
                        <tr class="l1"><td><button class="fold"></button>所有构件</td><td><input type="checkbox" class="partial" aria-label="显示所有构件"></td><td><input type="checkbox" aria-label="所有构件名称"></td></tr>
                        <tr class="l2"><td><button class="fold"></button>施工段</td><td><input type="checkbox" class="partial" aria-label="显示施工段"></td><td><input type="checkbox" aria-label="施工段名称"></td></tr>
                        <tr class="l3"><td>土方工程</td><td><input type="checkbox" aria-label="显示土方工程"></td><td><input type="checkbox" aria-label="土方工程名称"></td></tr>
                        <tr class="l3"><td>基础工程</td><td><input type="checkbox" aria-label="显示基础工程"></td><td><input type="checkbox" aria-label="基础工程名称"></td></tr>
                        <tr class="l3"><td>主体结构</td><td><input type="checkbox" checked aria-label="显示主体结构"></td><td><input type="checkbox" aria-label="主体结构名称"></td></tr>
                        <tr class="l3"><td>二次结构</td><td><input type="checkbox" aria-label="显示二次结构"></td><td><input type="checkbox" aria-label="二次结构名称"></td></tr>
                        <tr class="l3"><td>装饰装修</td><td><input type="checkbox" aria-label="显示装饰装修"></td><td><input type="checkbox" aria-label="装饰装修名称"></td></tr>
                        <tr class="l3"><td>外墙工程</td><td><input type="checkbox" aria-label="显示外墙工程"></td><td><input type="checkbox" aria-label="外墙工程名称"></td></tr>
                        <tr class="l3"><td>其它土建</td><td><input type="checkbox" aria-label="显示其它土建"></td><td><input type="checkbox" aria-label="其它土建名称"></td></tr>
                        <tr class="l3 last"><td>钢筋工程</td><td><input type="checkbox" checked aria-label="显示钢筋工程"></td><td><input type="checkbox" aria-label="钢筋工程名称"></td></tr>
                        <tr class="l2"><td><button class="fold"></button>轴线</td><td><input type="checkbox" checked aria-label="显示轴线"></td><td><input type="checkbox" disabled aria-label="轴线名称"></td></tr>
                        <tr class="l3"><td>轴网</td><td><input type="checkbox" checked aria-label="显示轴网"></td><td><input type="checkbox" disabled aria-label="轴网名称"></td></tr>
                        <tr class="l3 last"><td>辅助轴线</td><td><input type="checkbox" checked aria-label="显示辅助轴线"></td><td><input type="checkbox" disabled aria-label="辅助轴线名称"></td></tr>
                        <tr class="l2"><td><button class="fold"></button>柱</td><td><input type="checkbox" checked aria-label="显示柱类"></td><td><input type="checkbox" aria-label="柱类名称"></td></tr>
                        <tr class="l3"><td>柱</td><td><input type="checkbox" checked aria-label="显示柱"></td><td><input type="checkbox" aria-label="柱名称"></td></tr>
                        <tr class="l3"><td>构造柱</td><td><input type="checkbox" checked aria-label="显示构造柱"></td><td><input type="checkbox" aria-label="构造柱名称"></td></tr>
                        <tr class="l3"><td>砌体柱</td><td><input type="checkbox" checked aria-label="显示砌体柱"></td><td><input type="checkbox" aria-label="砌体柱名称"></td></tr>
                        <tr class="l3 last"><td>约束边缘非阴影区</td><td><input type="checkbox" checked aria-label="显示约束边缘非阴影区"></td><td><input type="checkbox" aria-label="约束边缘非阴影区名称"></td></tr>
                        <tr class="l2"><td><button class="fold"></button>墙</td><td><input type="checkbox" class="partial" aria-label="显示墙"></td><td><input type="checkbox" aria-label="墙名称"></td></tr>
                        <tr class="l3"><td>剪力墙</td><td><input type="checkbox" checked aria-label="显示剪力墙"></td><td><input type="checkbox" aria-label="剪力墙名称"></td></tr>
                        <tr class="l3"><td>人防门框墙</td><td><input type="checkbox" checked aria-label="显示人防门框墙"></td><td><input type="checkbox" aria-label="人防门框墙名称"></td></tr>
                        <tr class="l3"><td>砌体墙</td><td><input type="checkbox" checked aria-label="显示砌体墙"></td><td><input type="checkbox" aria-label="砌体墙名称"></td></tr>
                        <tr class="l3"><td>砌体加筋</td><td><input type="checkbox" aria-label="显示砌体加筋"></td><td><input type="checkbox" aria-label="砌体加筋名称"></td></tr>
                        <tr class="l3"><td>保温墙</td><td><input type="checkbox" checked aria-label="显示保温墙"></td><td><input type="checkbox" aria-label="保温墙名称"></td></tr>
                        <tr class="l3"><td>暗梁</td><td><input type="checkbox" aria-label="显示暗梁"></td><td><input type="checkbox" aria-label="暗梁名称"></td></tr>
                        <tr class="l3"><td>墙垛</td><td><input type="checkbox" aria-label="显示墙垛"></td><td><input type="checkbox" aria-label="墙垛名称"></td></tr>
                        <tr class="l3 last"><td>幕墙</td><td><input type="checkbox" checked aria-label="显示幕墙"></td><td><input type="checkbox" aria-label="幕墙名称"></td></tr>
                        <tr class="l2"><td><button class="fold"></button>门窗洞</td><td><input type="checkbox" aria-label="显示门窗洞"></td><td><input type="checkbox" aria-label="门窗洞名称"></td></tr>
                        <tr class="l3"><td>门</td><td><input type="checkbox" aria-label="显示门"></td><td><input type="checkbox" aria-label="门名称"></td></tr>
                        <tr class="l3"><td>窗</td><td><input type="checkbox" aria-label="显示窗"></td><td><input type="checkbox" aria-label="窗名称"></td></tr>
                        <tr class="l3"><td>门联窗</td><td><input type="checkbox" aria-label="显示门联窗"></td><td><input type="checkbox" aria-label="门联窗名称"></td></tr>
                        <tr class="l3"><td>墙洞</td><td><input type="checkbox" aria-label="显示墙洞"></td><td><input type="checkbox" aria-label="墙洞名称"></td></tr>
                        <tr class="l3"><td>带形窗</td><td><input type="checkbox" aria-label="显示带形窗"></td><td><input type="checkbox" aria-label="带形窗名称"></td></tr>
                        <tr class="l3"><td>带形洞</td><td><input type="checkbox" aria-label="显示带形洞"></td><td><input type="checkbox" aria-label="带形洞名称"></td></tr>
                    </tbody>
                </table>
                <div class="scrollbar tree-scroll"><i></i></div>
            </div>
            <div class="display-foot"><button class="push">恢复默认设置</button></div>
        </aside>
    </main>

    <!-- Status bar -->
    <footer class="status-bar">
        <div class="status-info"><span>层高： 5</span><span>标高： -5~0</span><span>选中图元：0</span><span>隐藏图元：0</span></div>
        <div class="status-tools">
            <button aria-label="正交"><svg viewBox="0 0 16 16"><path d="M3 1v13h12M3 9h5v5"/></svg></button>
            <button class="on drop" aria-label="捕捉"><svg viewBox="0 0 16 16"><path d="M3 2h11v12H3z"/><circle class="b" cx="3" cy="2" r="1.500"/></svg><i class="caret"></i></button>
            <button class="off" aria-label="交点"><svg><use href="#i-close"/></svg></button>
            <button class="drop" aria-label="角度"><svg viewBox="0 0 16 16"><path d="M11 2L1 14h13M7 8c2 1 3 3 3 6"/></svg><i class="caret"></i></button>
            <button class="drop" aria-label="偏移"><svg viewBox="0 0 16 16"><path d="M0 5h8M4 1v8"/><path fill="currentColor" d="M7 10h8v4H7z"/></svg><i class="caret"></i></button>
            <button aria-label="选择"><svg viewBox="0 0 16 16"><path d="M1 1h13v13H1z"/><path fill="currentColor" d="M4 4h7v7H4zM10 9l5 5-3 1z"/></svg></button>
            <button aria-label="折线"><svg viewBox="0 0 16 16"><path d="M2 15C2 9 4 4 8 4h5"/><path d="M6 2h3v3H6z"/><path fill="currentColor" d="M12 9l3 4-3-1z"/></svg></button>
        </div>
        <div class="status-hint"><svg viewBox="0 0 16 16"><path d="M2 14L14 2M9 2h5v5M2 9v5h5"/></svg>按鼠标左键指定第一个角点，或拾取构件图元</div>
        <div class="status-right">
            <span><svg viewBox="0 0 14 14"><circle cx="7" cy="7" r="7" fill="#f58220"/><path stroke="#fff" d="M7 3v5M7 9.500v1.500"/></svg>合法性检查存在问题，请点击查看</span>
            <span><svg viewBox="0 0 14 14"><circle cx="7" cy="7" r="7" fill="#5db812"/><path stroke="#fff" d="M3.500 7l2.500 2.500 4.500-5"/></svg>实时计算已完成</span>
        </div>
    </footer>

    <!-- Windows taskbar -->
    <footer class="taskbar">
        <button class="start" aria-label="开始"><svg viewBox="0 0 36 36"><circle cx="18" cy="18" r="17" fill="#235f8d" stroke="#8ab8d6"/><path fill="#7fb9d8" opacity=".6" d="M3 15C6-2 30-2 33 15c-9 5-21 5-30 0z"/><path fill="#f0532a" d="M10 11c3-2 5-2 8 0l-2 7c-3-2-5-2-7 0z"/><path fill="#8cc63f" d="M19 11c3 2 5 2 8 0l-2 7c-3 2-5 2-8 0z"/><path fill="#3fa9f5" d="M8 19c3-2 5-2 8 0l-2 7c-3-2-5-2-8 0z"/><path fill="#ffc83d" d="M17 20c3 2 5 2 8 0l-2 7c-3 2-5 2-8 0z"/></svg></button>
        <i class="task-grip"></i>
        <div class="tasks">
            <button aria-label="云应用"><svg><use href="#a-cloud"/></svg></button>
            <button><span class="yu">预</span></button>
            <button aria-label="广联达"><svg><use href="#a-g"/></svg></button>
            <button aria-label="浏览器"><svg><use href="#a-e"/></svg></button>
            <button class="current" aria-label="土建计量"><svg><use href="#a-t"/></svg></button>
        </div>
        <i class="task-grip tray-grip"></i>
        <div class="tray">
            <svg viewBox="0 0 16 16"><path fill="#ccc" d="M0 6h16v8H0z"/><path fill="none" stroke="#555" stroke-dasharray="1 1" d="M2 8.500h12M2 11.500h12"/><path fill="none" stroke="#ccc" d="M8 6c0-4 4 0 6-5"/></svg>
            <svg viewBox="0 0 16 16"><circle cx="8" cy="7" r="7" fill="#1a2fae" stroke="#cfd8ff"/><text x="5" y="11">?</text></svg>
            <svg viewBox="0 0 16 16"><path fill="none" stroke="#fff" d="M5 3h5v4H5zM7 3V1h5v4h-2"/><path fill="#fff" d="M5 12h6l-3 3z"/></svg>
            <svg><use href="#a-g"/></svg>
            <svg viewBox="0 0 16 16"><rect width="16" height="16" rx="2" fill="#fff"/><path fill="#f08a24" d="M1 10h14v5H1z"/><path fill="none" stroke="#1780d8" stroke-width="3" d="M11 4C5 1 3 8 7 9s5-2 3-3"/></svg>
            <svg><use href="#a-cloud"/></svg>
            <svg><use href="#a-e"/></svg>
            <svg viewBox="0 0 16 16"><path fill="#bbb" d="M2 1h5v6H2zM1 7h7v5H1z"/><circle cx="11" cy="11" r="5" fill="#2ea02e"/><path fill="none" stroke="#fff" stroke-width="1.500" d="M9 11l2 2 3-4"/></svg>
            <svg viewBox="0 0 16 16"><path fill="#e0562f" stroke="#fff" stroke-width=".5" d="M1 5h3l5-5v15l-5-5H1z"/><path fill="none" stroke="#c44" d="M11 4c2 2 2 5 0 7M13 2c3 3 3 8 0 11"/></svg>
            <svg viewBox="0 0 16 16"><circle cx="8" cy="8" r="7.500" fill="#f5c400"/><path fill="none" stroke="#2b9c2b" stroke-width="3" d="M8 4v8M4 8h8"/></svg>
            <svg viewBox="0 0 16 16"><path fill="#fff" d="M0 12h2v2H0zM3 10h2v4H3zM6 7h2v7H6zM9 4h2v10H9zM12 1h2v13h-2z"/></svg>
            <svg viewBox="0 0 16 16"><path fill="#fff" d="M1 5h3l4-4v14l-4-4H1z"/><path fill="none" stroke="#fff" d="M10 5c2 2 2 4 0 6M12 3c3 3 3 7 0 10"/></svg>
        </div>
        <div class="clock"><span>16:27</span><span>2025/4/17</span></div>
        <div class="ime"><svg viewBox="0 0 16 16"><path fill="#fff" d="M0 0h16v16H0z"/><path fill="#123" d="M6 4l4 4-4 4z"/></svg></div>
        <button class="show-desktop" aria-label="显示桌面"></button>
    </footer>
</body>
</html>
```
FILE: styles.css
```css
/* Basic reset */
* {
    margin: 0;
    padding: 0;
    box-sizing: border-box;
}

:root {
    --accent: #1b74e8;
    --accent-light: #cfe2fb;
    --line: #d8d8d8;
}

body {
    height: 100vh;
    display: flex;
    flex-direction: column;
    overflow: hidden;
    background: #fff;
    color: #333;
    font-family: "Noto Sans", "Noto Sans CJK SC", sans-serif;
    font-size: 12px;
    line-height: 16px;
}

button, input, select {
    font: inherit;
    color: inherit;
    background: none;
    border: none;
    outline: none;
}

button {
    white-space: nowrap;
}

a {
    color: inherit;
    text-decoration: none;
}

svg {
    width: 16px;
    height: 16px;
    flex: none;
    fill: none;
    stroke: #4a5162;
    color: #4a5162;
    overflow: visible;
}

.sprite {
    position: absolute;
    width: 0;
    height: 0;
}

/* Icon colours */
.b {
    stroke: var(--accent);
}

.bf {
    fill: var(--accent);
    stroke: none;
}

.bl {
    fill: var(--accent-light);
}

.n1, .n2, .n3 {
    stroke: none;
}

.n1 {
    fill: #b9c4da;
}

.n2 {
    fill: #8f9fc0;
}

.n3 {
    fill: #50628a;
}

.nw {
    stroke: #f5f6f8;
}

.nd {
    stroke: #50628a;
}

.aw {
    stroke: #fff;
    stroke-width: 3;
}

.caret {
    display: inline-block;
    border: 3px solid transparent;
    border-top: 4px solid #777;
    border-bottom: 0;
    flex: none;
}

.caret.wide {
    border-width: 4px;
    border-bottom: 0;
    margin-left: 6px;
    vertical-align: middle;
}

:disabled {
    color: #aaa;
    --accent: #b4b4b4;
    --accent-light: #fff;
}

:disabled svg {
    stroke: #b4b4b4;
    color: #b4b4b4;
}

:disabled .caret {
    border-top-color: #b4b4b4;
}

/* Title bar */
.title-bar {
    height: 30px;
    display: flex;
    align-items: flex-start;
    justify-content: space-between;
    position: relative;
}

.quick-bar {
    display: flex;
    align-items: center;
    height: 26px;
    padding-left: 2px;
}

.quick-bar .logo {
    width: 20px;
    height: 20px;
    stroke: none;
    margin-right: 13px;
}

.quick {
    width: 34px;
    display: flex;
    align-items: center;
    justify-content: center;
}

.quick svg {
    display: block;
}

.quick.drop {
    gap: 4px;
}

.quick-more {
    padding: 0 6px;
}

.window-title {
    position: absolute;
    left: 0;
    right: 0;
    top: 5px;
    text-align: center;
    font-size: 12px;
    font-weight: normal;
    pointer-events: none;
}

.window-buttons {
    display: flex;
    padding: 5px 1px 0 0;
}

.window-buttons button {
    width: 35px;
}

.window-buttons svg {
    width: 12px;
    height: 12px;
    stroke: #666;
}

/* Menu tabs */
.menu-bar {
    height: 26px;
    display: flex;
    align-items: center;
    border-bottom: 1px solid #eee;
}

.menu-tabs {
    flex: 1;
    display: flex;
    padding-left: 9px;
}

.menu-tabs button {
    height: 26px;
    padding: 0 13px;
    font-size: 13px;
    position: relative;
}

.menu-tabs .active {
    color: var(--accent);
    font-weight: bold;
}

.menu-tabs .active::after {
    content: "";
    position: absolute;
    left: 10px;
    right: 10px;
    bottom: 0;
    height: 2px;
    background: var(--accent);
}

.menu-search {
    width: 320px;
    height: 17px;
    margin-top: 4px;
    display: flex;
    align-items: center;
    border: 1px solid #e0e0e0;
    border-radius: 2px;
    padding: 0 7px 0 3px;
}

.menu-search input {
    flex: 1;
    min-width: 0;
    color: #111;
}

.menu-search svg {
    width: 11px;
    height: 11px;
    stroke: #999;
}

.account {
    display: flex;
    align-items: center;
    margin-left: 6px;
    margin-top: 4px;
}

.avatar {
    height: 18px;
    stroke: none;
}

.help-icons {
    display: flex;
    align-items: center;
    gap: 8px;
    margin: 3px 5px 0 18px;
}

.help-icons .red-app {
    stroke: none;
}

.question {
    font-size: 16px;
    width: 16px;
    display: flex;
    align-items: center;
    gap: 2px;
}

/* Ribbon */
.ribbon {
    display: flex;
    height: 101px;
    padding: 2px 0 3px;
    border-bottom: 1px solid var(--line);
}

.group {
    display: flex;
    flex-direction: column;
    justify-content: space-between;
    border-right: 1px solid var(--line);
}

.tools {
    display: grid;
    align-items: start;
    padding-top: 2px;
}

.g-select .tools {
    grid-template-columns: 40px 98px 79px;
    padding-left: 8px;
    column-gap: 3px;
}

.g-sheet .tools {
    grid-template-columns: 79px 114px;
    padding-left: 10px;
}

.g-common .tools {
    grid-template-columns: 68px 112px 85px;
    padding-left: 10px;
}

.g-modify .tools {
    grid-template-columns: 54px 54px 62px 57px;
    padding-left: 10px;
}

.g-draw .tools {
    grid-template-columns: 33px 27px;
    padding-left: 8px;
}

.g-detect .tools {
    grid-template-columns: 60px 62px 54px 100px 92px;
}

.g-smart .tools {
    grid-template-columns: 60px;
    width: 77px;
}

.g-edit .tools {
    grid-template-columns: 90px 80px;
    padding-left: 10px;
}

.tool {
    height: 24px;
    display: flex;
    align-items: center;
    gap: 3px;
}

.big {
    height: 72px;
    display: flex;
    flex-direction: column;
    align-items: center;
    gap: 8px;
    padding-top: 1px;
    border-radius: 3px;
}

.big.active {
    background: #c3daf3;
}

.big svg {
    width: 32px;
    height: 32px;
    stroke-width: 2;
}

.big .caret {
    margin-top: -2px;
}

.group-name {
    text-align: center;
    height: 18px;
}

/* Selector bar */
.selector-bar {
    display: flex;
    height: 31px;
    background: #f0f0f0;
}

.pick {
    display: block;
    position: relative;
}

.pick select {
    appearance: none;
    width: 100%;
    height: 100%;
}

.pick::after {
    content: "";
    position: absolute;
    right: 5px;
    top: 50%;
    margin-top: -2px;
    border: 3px solid transparent;
    border-top: 4px solid #555;
    border-bottom: 0;
    pointer-events: none;
}

.selector-bar .pick {
    width: 100px;
    border-right: 1px solid var(--line);
    padding-left: 2px;
}

/* Workspace */
.workspace {
    flex: 1;
    min-height: 0;
    display: flex;
}

.panel {
    display: flex;
    flex-direction: column;
    border: 1px solid #ccc;
    background: #fff;
    min-height: 0;
}

.panel-head {
    height: 29px;
    flex: none;
    display: flex;
    align-items: center;
    background: #eeeef0;
    padding: 0 9px 0 6px;
}

.grip {
    width: 7px;
    height: 14px;
    background: radial-gradient(circle, #777 1px, transparent 1px) 0 0 / 4px 4px;
}

.panel-title {
    margin-left: 12px;
}

.close {
    margin-left: auto;
    display: flex;
}

.close svg {
    width: 10px;
    height: 10px;
    stroke: #888;
    stroke-width: 1.5;
}

.tab {
    height: 29px;
    padding: 0 10px;
}

.grip + .tab {
    margin-left: 10px;
}

.tab.active {
    background: #fff;
    color: var(--accent);
}

.scrollbar {
    width: 12px;
    flex: none;
    display: flex;
    justify-content: center;
}

.scrollbar i {
    width: 4px;
    border-radius: 2px;
    background: #e6e6e6;
}

.nav-panel {
    width: 130px;
    margin-right: 4px;
}

.nav-body {
    flex: 1;
    display: flex;
    min-height: 0;
    overflow: hidden;
}

.nav-list {
    flex: 1;
    min-width: 0;
}

.nav-item {
    display: flex;
    align-items: center;
    height: 42px;
    gap: 14px;
    padding-left: 11px;
    background: #f5f6f8;
    position: relative;
}

.nav-item svg {
    width: 24px;
    height: 24px;
}

.nav-item.active {
    background: #e9ebef;
    color: #3f7ee0;
}

.nav-sub a {
    display: block;
    padding-left: 21px;
    height: 28px;
    line-height: 28px;
    white-space: nowrap;
}

.nav-sub .active {
    color: #1683f7;
}

.trial {
    position: absolute;
    right: 0;
    top: 4px;
    height: 19px;
    line-height: 19px;
    padding: 0 1px 0 6px;
    border-radius: 10px 0 0 10px;
    background: #f0c275;
    color: #6a3d10;
    font-size: 11px;
}

.nav-item .trial-lock {
    position: absolute;
    width: 9px;
    height: 9px;
    right: 12px;
    bottom: 15px;
}

.nav-scroll i {
    height: 60%;
    margin-top: 11px;
}

.side-column {
    width: 280px;
    margin-right: 4px;
    display: flex;
    flex-direction: column;
    min-height: 0;
}

/* Component list */
.list-tools {
    display: flex;
    gap: 9px;
    padding: 6px 10px 7px;
}

.list-tools button {
    width: 32px;
    height: 26px;
    border-radius: 3px;
    background: #f2f2f3;
    display: flex;
    align-items: center;
    justify-content: center;
}

.list-tools .split {
    display: flex;
    gap: 1px;
}

.list-tools .arrow {
    width: 12px;
}

.list-tools .more {
    width: 26px;
    margin-left: auto;
    border: 1px solid #ddd;
    background: #fafafa;
}

.arrows {
    fill: #4a5162;
    stroke: none;
}

.list-search {
    margin: 0 8px;
    height: 26px;
    border-radius: 13px;
    background: #f3f3f4;
    display: flex;
    align-items: center;
    padding: 0 12px;
}

.list-search input {
    flex: 1;
    min-width: 0;
}

.list-search input::placeholder {
    color: #777;
}

.list-search svg {
    width: 11px;
    height: 11px;
    stroke: #999;
    stroke-width: 2;
}

.list-body {
    display: flex;
    padding: 10px 4px 4px 21px;
}

.components {
    flex: 1;
    list-style: none;
    font-size: 13px;
}

.components li {
    height: 24px;
    padding-top: 1px;
}

.components a {
    display: inline-block;
    height: 21px;
    line-height: 21px;
    padding: 0 5px 0 3px;
    border-radius: 3px;
}

.components .selected {
    background: #c3daf3;
}

.list-scroll i {
    height: 150px;
    margin-top: auto;
}

/* Property list */
.prop-panel {
    flex: 1;
    margin-top: 3px;
}

.prop-body {
    flex: 1;
    min-height: 0;
    display: flex;
    overflow: hidden;
    padding-top: 2px;
}

.props {
    flex: 1;
    border-collapse: collapse;
    table-layout: fixed;
    align-self: flex-start;
}

.props th {
    height: 24px;
    font-weight: normal;
    background: #ededee;
    border: 1px solid var(--line);
    border-width: 0 1px 1px 0;
}

.props th:first-child {
    width: 101px;
}

.props th:last-child {
    width: 41px;
}

.props th.strong {
    font-weight: bold;
}

.props td {
    height: 25px;
}

.props .section td {
    background: #ededee;
    padding-left: 8px;
}

.section .caret {
    margin-right: 8px;
    vertical-align: middle;
}

.props label {
    padding-left: 15px;
    color: #1d53f0;
    white-space: nowrap;
}

.props .plain label {
    color: #333;
}

.props input {
    display: block;
    width: 123px;
    height: 21px;
    border: 1px solid var(--line);
    padding: 0 2px;
}

.props input:disabled {
    color: #888;
}

.dot-mark {
    display: block;
    width: 8px;
    height: 8px;
    margin: 0 auto;
    border-radius: 50%;
    background: #ddd;
    border: 1px solid #bbb;
}

.prop-scroll i {
    height: 208px;
    margin-top: 11px;
}

.push {
    height: 24px;
    padding: 0 15px;
    border: 1px solid #c4c4c4;
    border-radius: 3px;
    background: #fff;
}

.section-edit {
    align-self: flex-start;
    margin: 4px 0 2px 6px;
}

/* Drawing area */
.canvas {
    flex: 1;
    min-width: 0;
    position: relative;
    overflow: hidden;
    background: #000;
}

.plan {
    position: absolute;
    width: 100%;
    height: 100%;
}

.red {
    stroke: #d00000;
}

.red .dim {
    stroke: #600;
}

.thick {
    stroke-width: 2;
}

.green {
    stroke: #008000;
}

.green.dim {
    stroke: #004a00;
}

.band {
    stroke: #6b6b1c;
    stroke-width: 8;
}

.purple {
    fill: #8a00ff;
    stroke: none;
}

.cyan {
    fill: #3ff;
    stroke: none;
}

.bubble {
    stroke: #008000;
}

.bubble-text {
    fill: #fff;
    stroke: none;
    font-size: 17px;
    text-anchor: middle;
}

.axes {
    stroke: none;
    font-size: 15px;
    text-anchor: middle;
}

.axis-y {
    fill: #0f0;
}

.axis-x {
    fill: #f00;
}

.handle {
    position: absolute;
    top: 380px;
    width: 16px;
    height: 62px;
    background: #444;
    border-radius: 0 4px 4px 0;
}

.handle.left {
    left: 0;
}

.handle.right {
    right: 0;
    border-radius: 4px 0 0 4px;
}

.handle::after {
    content: "";
    position: absolute;
    left: 6px;
    top: 28px;
    width: 5px;
    height: 5px;
    border: 1px solid #999;
    border-width: 0 0 1px 1px;
    transform: rotate(45deg);
}

.handle.right::after {
    transform: rotate(225deg);
}

.view-tools {
    position: absolute;
    right: 0;
    top: 0;
    width: 33px;
    height: 245px;
    background: #fff;
    border-radius: 0 0 3px 3px;
    display: flex;
    flex-direction: column;
    align-items: center;
    gap: 9px;
    padding-top: 13px;
}

.view-tools svg {
    display: block;
    width: 20px;
    height: 20px;
}

.view-tools text {
    font-size: 8px;
    font-weight: bold;
    fill: var(--accent);
    stroke: none;
}

.view-tools hr {
    width: 24px;
    border: none;
    border-top: 1px solid #888;
}

/* Section editor dialog */
.dialog {
    position: absolute;
    left: 223px;
    right: 11px;
    top: 104px;
    bottom: 106px;
    display: flex;
    flex-direction: column;
    background: #fff;
    border: 1px solid #b9bdc3;
    border-right-width: 2px;
    border-bottom-width: 2px;
    box-shadow: 0 0 10px rgba(0, 0, 0, 0.6);
}

.dialog-title {
    height: 28px;
    display: flex;
    align-items: center;
    padding: 0 11px 0 18px;
    border-bottom: 2px solid #c5c8cc;
    font-size: 14px;
}

.dialog-title .close svg {
    width: 12px;
    height: 12px;
}

.dialog-tools {
    height: 33px;
    display: flex;
    align-items: center;
    padding: 2px 3px 0;
}

.dialog-tools button {
    height: 22px;
    padding: 0 7px;
}

.dialog-tools .on {
    background: #c3daf3;
    border-radius: 3px;
    padding: 0 5px;
}

.sep {
    width: 1px;
    height: 24px;
    margin: 0 7px;
    background: var(--line);
}

.radio {
    display: flex;
    align-items: center;
    gap: 4px;
    width: 66px;
    padding-left: 2px;
    color: #000;
}

.radio + .radio {
    width: 44px;
}

.radio input {
    appearance: none;
    width: 14px;
    height: 14px;
    border: 1px solid #888;
    border-radius: 50%;
}

.radio input:checked {
    background: radial-gradient(circle, var(--accent) 3px, #fff 4px);
}

.dialog-tools .line-drop {
    display: flex;
    align-items: center;
    gap: 4px;
    padding: 0 4px 0 2px;
}

.dialog-canvas {
    flex: 1;
    position: relative;
    background: #000;
    overflow: hidden;
}

.section-drawing {
    position: absolute;
    width: 100%;
    height: 100%;
}

.grid {
    stroke: #30353f;
    stroke-dasharray: 18 4 3 4;
}

.leader {
    stroke: #999;
    stroke-dasharray: 3 3;
}

.outline {
    stroke: #f0f0f0;
    stroke-width: 3;
}

.stirrup {
    stroke: #008cff;
    stroke-width: 6;
}

.ties {
    stroke: #b8cce8;
    stroke-dasharray: 4 3;
}

.corner-bar {
    stroke: #ffe02a;
    stroke-width: 2;
}

.side-bar {
    stroke: #f0f;
    stroke-width: 2;
}

.dims {
    stroke: #0f0;
}

.dim-text {
    fill: #fff;
    stroke: none;
    font-family: "Liberation Serif", "Noto Sans CJK SC", serif;
    font-size: 28px;
    font-weight: 300;
}

.bar-text {
    fill: #0f0;
    stroke: none;
    font-family: "Liberation Mono", monospace;
    font-size: 25px;
}

.bar-info {
    position: absolute;
    left: 4px;
    top: 1px;
    height: 42px;
    display: flex;
    align-items: center;
    gap: 7px;
    padding: 0 8px;
    background: #000;
    color: #ddd;
}

.bar-info .pick {
    width: 135px;
    height: 26px;
    background: #fff;
    border-radius: 3px;
    color: #333;
    padding-left: 7px;
}

.dialog-status {
    height: 30px;
    display: flex;
    align-items: center;
    padding: 0 3px;
    background: #fcfcfc;
}

.dialog-status button {
    width: 25px;
    height: 25px;
    background: #d9e6fb;
    border: 1px solid #2e7be0;
    border-radius: 3px;
    display: flex;
    align-items: center;
    justify-content: center;
}

.dialog-status .resize {
    width: 9px;
    height: 9px;
    margin: 12px 0 0 auto;
    fill: #777;
    stroke: none;
}

/* Display settings */
.display-panel {
    width: 290px;
    margin-left: 3px;
}

.display-panel .panel-title {
    margin-left: 13px;
}

.display-tabs {
    display: flex;
    gap: 3px;
    align-items: flex-end;
    height: 27px;
    padding-left: 3px;
    border-bottom: 1px solid #ccc;
}

.display-tabs button {
    height: 21px;
    padding: 0 6px;
    background: #ddd;
    border-radius: 3px 3px 0 0;
}

.display-tabs .active {
    height: 24px;
    background: #fff;
    border: 1px solid #ccc;
    border-bottom: 0;
    color: var(--accent);
    margin-bottom: -1px;
}

.tree-box {
    flex: 1;
    min-height: 0;
    display: flex;
    overflow: hidden;
    margin: 2px 2px 0 3px;
    border: 1px solid var(--line);
}

.tree {
    flex: 1;
    border-collapse: collapse;
    table-layout: fixed;
    align-self: flex-start;
}

.tree th, .tree td {
    height: 21px;
    border-right: 1px solid var(--line);
    border-bottom: 1px solid var(--line);
    font-weight: normal;
    text-align: center;
}

.tree th {
    height: 19px;
}

.tree th:not(:first-child) {
    width: 63px;
}

.tree td:first-child {
    text-align: left;
    white-space: nowrap;
}

.l1 td:first-child {
    padding-left: 2px;
}

.l2 td:first-child {
    padding-left: 12px;
    background: linear-gradient(#ddd, #ddd) 8px 0 / 1px 100% no-repeat;
}

.l3 td:first-child {
    padding-left: 41px;
    background:
        linear-gradient(#ddd, #ddd) 8px 0 / 1px 100% no-repeat,
        linear-gradient(#ddd, #ddd) 18px 0 / 1px 100% no-repeat,
        linear-gradient(#ddd, #ddd) 18px 10px / 17px 1px no-repeat;
}

.l3.last td:first-child {
    background-size: 1px 100%, 1px 10px, 17px 1px;
}

.fold {
    width: 13px;
    height: 13px;
    margin-right: 6px;
    border: 1px solid #888;
    border-radius: 2px;
    background: linear-gradient(#555, #555) center / 5px 1px no-repeat #fff;
    vertical-align: -2px;
}

.tree input {
    appearance: none;
    display: block;
    width: 14px;
    height: 14px;
    margin: 0 auto;
    border: 1px solid #888;
    border-radius: 2px;
    background: #fff;
}

.tree input:checked {
    background: #2a7ce4;
    border-color: #2a7ce4;
}

.tree input:checked::before {
    content: "";
    display: block;
    width: 8px;
    height: 5px;
    margin: 2px 0 0 2px;
    border: 2px solid #fff;
    border-width: 0 0 2px 2px;
    transform: rotate(-45deg);
}

.tree input.partial::before {
    content: "";
    display: block;
    width: 10px;
    height: 10px;
    margin: 1px;
    background: #99c7ff;
    border: 1px solid #3f8fee;
}

.tree input:disabled {
    background: #eee;
    border-color: #bbb;
}

.tree-scroll i {
    height: 155px;
    margin-top: 12px;
}

.display-foot {
    display: flex;
    justify-content: flex-end;
    padding: 7px 8px 6px;
}

.display-foot .push {
    height: 26px;
    padding: 0 8px;
}

/* Status bar */
.status-bar {
    height: 31px;
    display: flex;
    align-items: center;
    background: #fcfcfc;
}

.status-info {
    display: grid;
    grid-template-columns: 90px 140px 110px 110px;
    padding-left: 2px;
}

.status-tools {
    display: flex;
    gap: 4px;
}

.status-tools button {
    width: 25px;
    height: 24px;
    border: 1px solid #999;
    border-radius: 3px;
    display: flex;
    align-items: center;
    justify-content: center;
    gap: 3px;
}

.status-tools .drop {
    width: 36px;
}

.status-tools .on {
    background: #dfeafb;
    border-color: #2e7be0;
}

.status-tools .off svg {
    stroke: #aaa;
}

.status-hint {
    flex: 1;
    display: flex;
    align-items: center;
    gap: 4px;
    padding-left: 15px;
}

.status-right {
    display: flex;
    gap: 12px;
    padding-right: 11px;
}

.status-right span {
    display: flex;
    align-items: center;
    gap: 6px;
}

.status-right svg {
    width: 14px;
    height: 14px;
    stroke: none;
    stroke-width: 1.5;
}

/* Windows taskbar */
.taskbar {
    height: 40px;
    display: flex;
    align-items: center;
    color: #fff;
    border-top: 1px solid #1f3f55;
    background:
        linear-gradient(50deg, transparent 35%, rgba(160, 210, 255, 0.8) 50%, transparent 65%) 71% 0 / 100px 100% no-repeat,
        linear-gradient(90deg, #1c5a8e, #3687bd 4%, #49a0d4 25%, #4fa9db 45%, #3c94d0 55%, #2478be 64%, #1d63ab 74%, #174a85 78%, #143c70);
}

.taskbar svg {
    stroke: none;
}

.start {
    width: 54px;
    padding-left: 9px;
}

.start svg {
    display: block;
    width: 36px;
    height: 36px;
}

.task-grip {
    width: 8px;
    height: 30px;
    margin: 0 9px 0 4px;
    background: radial-gradient(circle, #123 1px, transparent 1px) 0 0 / 3px 4px;
}

.tasks {
    flex: 1;
    display: flex;
    gap: 3px;
}

.tasks button {
    width: 59px;
    height: 38px;
    border: 1px solid #1e4e75;
    border-radius: 3px;
    background: linear-gradient(135deg, rgba(255, 255, 255, 0.55), rgba(255, 255, 255, 0.15) 60%);
    box-shadow: inset 0 0 1px 1px rgba(255, 255, 255, 0.4);
    display: flex;
    align-items: center;
    justify-content: center;
}

.tasks .current {
    background: linear-gradient(135deg, rgba(255, 255, 255, 0.9), rgba(255, 255, 255, 0.45));
}

.tasks svg {
    width: 32px;
    height: 32px;
}

.yu {
    width: 32px;
    height: 32px;
    line-height: 32px;
    border-radius: 6px;
    background: #3e93f8;
    font-size: 24px;
    font-weight: bold;
    color: #fff;
}

.tray-grip {
    margin: 0 12px 0 0;
}

.tray {
    display: flex;
    align-items: center;
    gap: 7px;
}

.tray text {
    fill: #fff;
    font-weight: bold;
}

.clock {
    width: 92px;
    display: flex;
    flex-direction: column;
    text-align: center;
    line-height: 18px;
}

.ime {
    margin: 0 12px 0 3px;
    display: flex;
}

.show-desktop {
    width: 14px;
    height: 39px;
    border: 1px solid #6f94b8;
    background: rgba(255, 255, 255, 0.15);
}
```
